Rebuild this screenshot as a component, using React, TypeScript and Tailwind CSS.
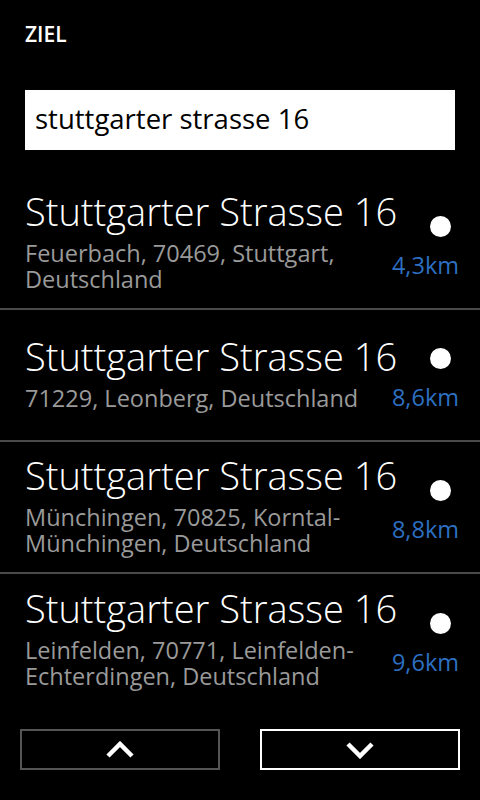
import React from "react";

const items = [
  { sub: ["Feuerbach, 70469, Stuttgart,", "Deutschland"], dist: "4,3km" },
  { sub: ["71229, Leonberg, Deutschland"], dist: "8,6km" },
  { sub: ["Münchingen, 70825, Korntal-", "Münchingen, Deutschland"], dist: "8,8km" },
  { sub: ["Leinfelden, 70771, Leinfelden-", "Echterdingen, Deutschland"], dist: "9,6km" },
];

function Chevron({ up }: { up?: boolean }) {
  return (
    <svg width="28" height="18" viewBox="0 0 28 18" fill="none">
      <polyline
        points={up ? "2,15 14,3 26,15" : "2,3 14,15 26,3"}
        stroke="white"
        strokeWidth="4.5"
        strokeLinejoin="miter"
        strokeLinecap="butt"
      />
    </svg>
  );
}

export default function App() {
  return (
    <div className="w-[480px] h-[800px] bg-black text-white flex flex-col overflow-hidden font-['Open_Sans','Noto_Sans',sans-serif]">
      <div className="pt-[24px] px-[25px] text-[21px] leading-[21px] font-semibold">ZIEL</div>
      <div className="mt-[45px] mx-[25px] h-[60px] bg-white flex items-center px-[10px]">
        <span className="text-black text-[27.5px] leading-none -mt-[2px]">stuttgarter strasse 16</span>
      </div>
      <div className="mt-[28px] flex flex-col">
        {items.map((it, i) => (
          <div
            key={i}
            className={`h-[132px] flex items-center pl-[25px] pr-[21px] ${i < 3 ? "border-b-2 border-[#4a4a4a]" : ""}`}
          >
            <div className="flex-1 min-w-0 flex flex-col mb-[6px]">
              <div className="text-[38px] leading-[44px] font-light whitespace-nowrap">Stuttgarter Strasse 16</div>
              <div className="mt-[7px] text-[23.5px] leading-[26px] text-[#9a9a9a] whitespace-nowrap">
                {it.sub[0]}
                {it.sub[1] && (
                  <>
                    <br />
                    {it.sub[1]}
                  </>
                )}
              </div>
            </div>
            <div className="flex flex-col items-end mt-[8px]">
              <div className="w-[21px] h-[21px] rounded-full bg-white mr-[8px]" />
              <div className="mt-[15px] text-[23.5px] leading-[26px] text-[#2d6fc2]">{it.dist}</div>
            </div>
          </div>
        ))}
      </div>
      <div className="mt-[23px] flex gap-[40px] px-[20px]">
        <div className="w-[200px] h-[41px] border-2 border-[#555555] flex items-center justify-center">
          <Chevron up />
        </div>
        <div className="w-[200px] h-[41px] border-2 border-white flex items-center justify-center">
          <Chevron />
        </div>
      </div>
    </div>
  );
}
